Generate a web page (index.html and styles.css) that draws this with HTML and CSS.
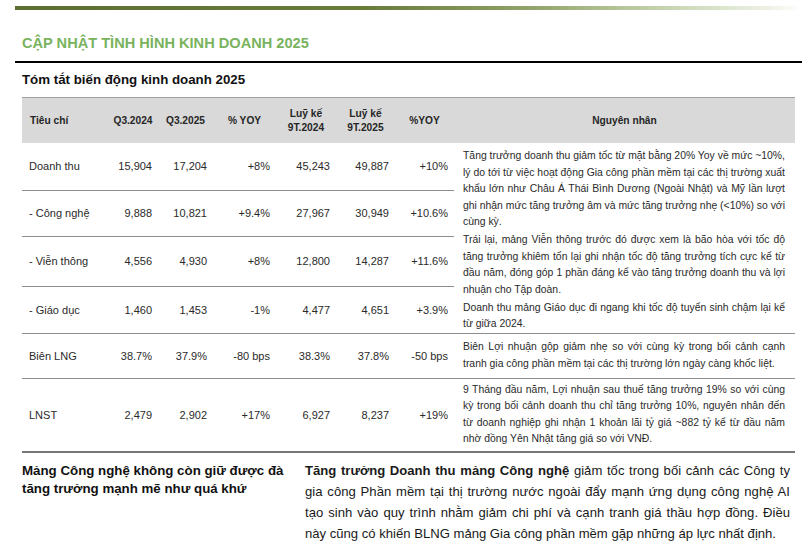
FILE: index.html
```html
<!DOCTYPE html>
<html lang="vi">
<head>
  <meta charset="UTF-8" />
  <meta name="viewport" content="width=device-width, initial-scale=1" />
  <title>Cập nhật tình hình kinh doanh 2025</title>
  <link rel="stylesheet" href="styles.css">
</head>
<body>
  <div class="trang">
    <div class="thanh-tren"></div>

    <h1 class="tieu-de">CẬP NHẬT TÌNH HÌNH KINH DOANH 2025</h1>
    <h2 class="tieu-de-phu">Tóm tắt biến động kinh doanh 2025</h2>

    <div class="noi-dung">
      <table class="bang">
        <colgroup>
          <col style="width: 86px">
          <col style="width: 50px">
          <col style="width: 55px">
          <col style="width: 63px">
          <col style="width: 60px">
          <col style="width: 59px">
          <col style="width: 59px">
          <col style="width: 341px">
        </colgroup>
        <thead>
          <tr>
            <th class="trai">Tiêu chí</th>
            <th>Q3.2024</th>
            <th>Q3.2025</th>
            <th>% YOY</th>
            <th>Luỹ kế<br>9T.2024</th>
            <th>Luỹ kế<br>9T.2025</th>
            <th>%YOY</th>
            <th>Nguyên nhân</th>
          </tr>
        </thead>
        <tbody>
          <tr class="h1">
            <td class="trai">Doanh thu</td>
            <td>15,904</td>
            <td>17,204</td>
            <td>+8%</td>
            <td>45,243</td>
            <td>49,887</td>
            <td>+10%</td>
            <td class="ly-do nhom" rowspan="4">
              <p>Tăng trưởng doanh thu giảm tốc từ mặt bằng 20% Yoy về mức ~10%, lý do tới từ việc hoạt động Gia công phần mềm tại các thị trường xuất khẩu lớn như Châu Á Thái Bình Dương (Ngoài Nhật) và Mỹ lần lượt ghi nhận mức tăng trưởng âm và mức tăng trưởng nhẹ (&lt;10%) so với cùng kỳ.</p>
              <p>Trái lại, mảng Viễn thông trước đó được xem là bão hòa với tốc độ tăng trưởng khiêm tốn lại ghi nhận tốc độ tăng trưởng tích cực kể từ đầu năm, đóng góp 1 phần đáng kể vào tăng trưởng doanh thu và lợi nhuận cho Tập đoàn.</p>
              <p>Doanh thu mảng Giáo dục đi ngang khi tốc độ tuyển sinh chậm lại kể từ giữa 2024.</p>
            </td>
          </tr>
          <tr class="h2">
            <td class="trai">- Công nghệ</td>
            <td>9,888</td>
            <td>10,821</td>
            <td>+9.4%</td>
            <td>27,967</td>
            <td>30,949</td>
            <td>+10.6%</td>
          </tr>
          <tr class="h3">
            <td class="trai">- Viễn thông</td>
            <td>4,556</td>
            <td>4,930</td>
            <td>+8%</td>
            <td>12,800</td>
            <td>14,287</td>
            <td>+11.6%</td>
          </tr>
          <tr class="h4">
            <td class="trai">- Giáo dục</td>
            <td>1,460</td>
            <td>1,453</td>
            <td>-1%</td>
            <td>4,477</td>
            <td>4,651</td>
            <td>+3.9%</td>
          </tr>
          <tr class="h5">
            <td class="trai">Biên LNG</td>
            <td>38.7%</td>
            <td>37.9%</td>
            <td>-80 bps</td>
            <td>38.3%</td>
            <td>37.8%</td>
            <td>-50 bps</td>
            <td class="ly-do">Biên Lợi nhuận gộp giảm nhẹ so với cùng kỳ trong bối cảnh cạnh tranh gia công phần mềm tại các thị trường lớn ngày càng khốc liệt.</td>
          </tr>
          <tr class="h6 cuoi">
            <td class="trai">LNST</td>
            <td>2,479</td>
            <td>2,902</td>
            <td>+17%</td>
            <td>6,927</td>
            <td>8,237</td>
            <td>+19%</td>
            <td class="ly-do">9 Tháng đầu năm, Lợi nhuận sau thuế tăng trưởng 19% so với cùng kỳ trong bối cảnh doanh thu chỉ tăng trưởng 10%, nguyên nhân đến từ doanh nghiệp ghi nhận 1 khoản lãi tỷ giá ~882 tỷ kể từ đầu năm nhờ đồng Yên Nhật tăng giá so với VNĐ.</td>
          </tr>
        </tbody>
      </table>

      <div class="nhan-xet">
        <div class="nhan-xet-trai">Mảng Công nghệ không còn giữ được đà tăng trưởng mạnh mẽ như quá khứ</div>
        <div class="nhan-xet-phai"><b>Tăng trưởng Doanh thu mảng Công nghệ</b> giảm tốc trong bối cảnh các Công ty gia công Phần mềm tại thị trường nước ngoài đẩy mạnh ứng dụng công nghệ AI tạo sinh vào quy trình nhằm giảm chi phí và cạnh tranh giá thầu hợp đồng. Điều này cũng có khiến BLNG mảng Gia công phần mềm gặp những áp lực nhất định.</div>
      </div>
    </div>
  </div>
</body>
</html>
```

FILE: styles.css
```css
body {
  margin: 0;
  background: #fff;
  font-family: "Liberation Sans", Arial, sans-serif;
  color: #222;
}

.trang {
  width: 787px;
  margin-left: 15px;
  padding-top: 6px;
}

.thanh-tren {
  height: 4px;
  background: linear-gradient(90deg, #5b702f 0%, #687d3a 45%, #8fa268 65%, #c5d2ad 82%, #eef2e6 96%, #fff 100%);
}

.tieu-de {
  margin: 0;
  padding: 24px 7px 0;
  height: 27px;
  font-size: 14.6px;
  font-weight: 700;
  color: #79b35e;
  border-bottom: 2px solid #000;
  line-height: 18px;
}

.tieu-de-phu {
  margin: 0;
  padding: 8px 7px 0;
  font-size: 13.3px;
  font-weight: 700;
  color: #111;
  line-height: 18px;
  height: 26px;
}

.noi-dung {
  padding: 0 7px;
}

.bang {
  width: 773px;
  table-layout: fixed;
  border-collapse: collapse;
  font-size: 11px;
}

.bang th {
  height: 45px;
  padding: 0;
  background: #d9d9d9;
  border-top: 1px solid #a0a0a0;
  font-size: 10.2px;
  font-weight: 700;
  text-align: center;
  line-height: 14px;
  color: #262626;
}

.bang td {
  padding: 0 6px 0 0;
  text-align: right;
  border-bottom: 1px solid #8e8e8e;
  color: #2a2a2a;
  white-space: nowrap;
}

.bang th.trai,
.bang td.trai {
  text-align: left;
  padding-left: 7px;
}

.bang th.trai { padding-left: 8px; }

.bang .ly-do {
  white-space: normal;
  text-align: justify;
  padding: 0 10px 0 9px;
  font-size: 10.4px;
  line-height: 16.5px;
}

.bang .nhom {
  vertical-align: top;
  padding-top: 5px;
}

.ly-do p {
  margin: 0 0 1.5px;
}

.ly-do p:last-child {
  margin: 0;
}

.h1 { height: 47px; }
.h2 { height: 46px; }
.h3 { height: 50px; }
.h4 { height: 47px; }
.h5 { height: 45px; }
.h6 { height: 74px; }

.bang tr.cuoi td {
  border-bottom: 2px solid #777;
}

.nhan-xet {
  display: grid;
  grid-template-columns: 276px 1fr;
  gap: 7px;
  padding: 7px 5px 0 0;
}

.nhan-xet-trai {
  font-size: 13.3px;
  font-weight: 700;
  line-height: 18px;
  color: #111;
  padding-top: 2px;
}

.nhan-xet-phai {
  font-size: 13.1px;
  line-height: 21px;
  text-align: justify;
  color: #1a1a1a;
}

.nhan-xet-phai b {
  font-weight: 700;
}
```
